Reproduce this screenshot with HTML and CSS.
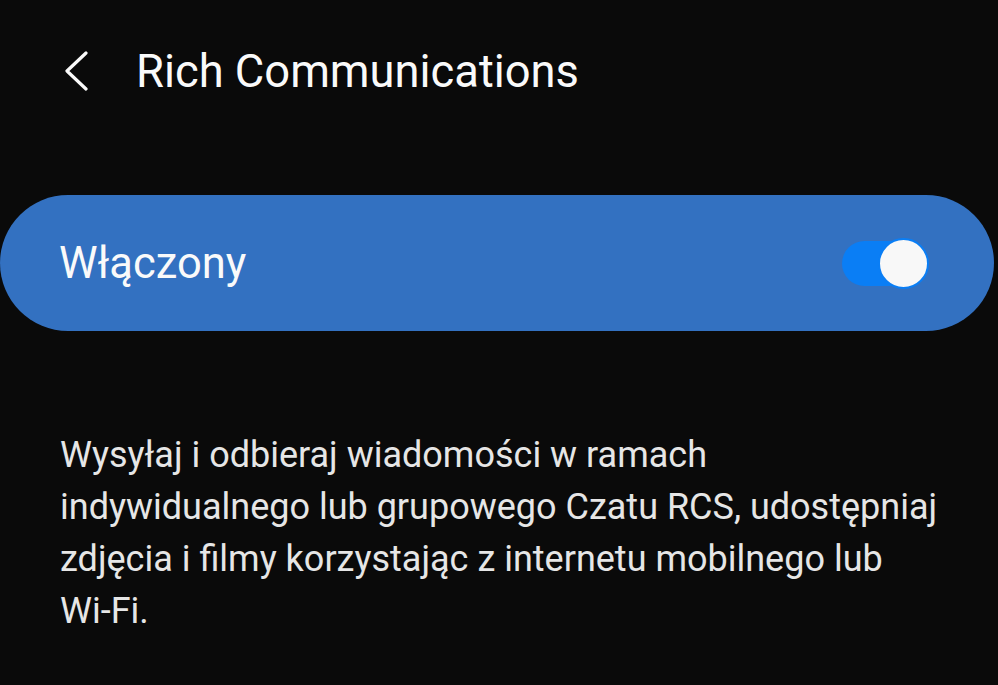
FILE: index.html
```html
<!DOCTYPE html>
<html lang="pl">
<head>
<meta charset="utf-8">
<link rel="stylesheet" href="styles.css">
</head>
<body>
<div class="screen">
  <header class="header">
    <svg class="back" width="28" height="40" viewBox="0 0 28 40"><path d="M24 2 L5 20 L24 38" fill="none" stroke="#fafafa" stroke-width="3.2" stroke-linecap="round" stroke-linejoin="round"/></svg>
    <h1 class="title">Rich Communications</h1>
  </header>
  <div class="card">
    <span class="card-label">Włączony</span>
    <div class="switch"><div class="thumb"></div></div>
  </div>
  <p class="desc">Wysyłaj i odbieraj wiadomości w ramach indywidualnego lub grupowego Czatu RCS, udostępniaj zdjęcia i filmy korzystając z internetu mobilnego lub <span class="nowrap">Wi-Fi.</span></p>
</div>
</body>
</html>
```
FILE: styles.css
```css
html, body {
  margin: 0;
  padding: 0;
  background: #0a0a0a;
  height: 100%;
  overflow: hidden;
}
.screen {
  font-family: Roboto, "Noto Sans", sans-serif;
  color: #fafafa;
}
.header {
  display: flex;
  align-items: center;
  height: 142px;
  padding-left: 62px;
}
.back {
  display: block;
  margin-right: 46px;
}
.title {
  margin: 0;
  font-size: 45.3px;
  font-weight: 400;
  letter-spacing: 0;
}
.card {
  margin-top: 53px;
  width: 994px;
  height: 136px;
  border-radius: 68px;
  background: #3371c1;
  display: flex;
  align-items: center;
  justify-content: space-between;
  box-sizing: border-box;
  padding: 0 66px 0 59px;
}
.card-label {
  font-size: 43.5px;
  color: #fafafa;
}
.switch {
  position: relative;
  width: 86px;
  height: 45px;
  border-radius: 23px;
  background: #0a7ef5;
}
.thumb {
  position: absolute;
  right: -1px;
  top: -3px;
  width: 47px;
  height: 47px;
  border-radius: 50%;
  background: #f8f8f8;
  border: 2px solid #0a7ef5;
}
.desc {
  margin: 98px 48px 0 60px;
  font-size: 36px;
  line-height: 52px;
  color: #e6e6e6;
}
.nowrap {
  white-space: nowrap;
}
```
